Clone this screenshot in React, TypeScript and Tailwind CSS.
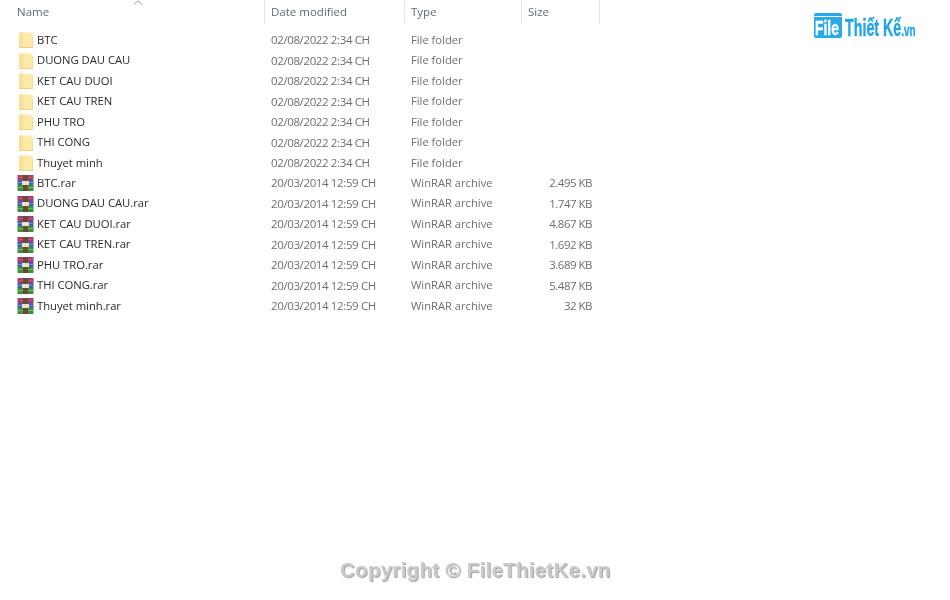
const folders = ["BTC", "DUONG DAU CAU", "KET CAU DUOI", "KET CAU TREN", "PHU TRO", "THI CONG", "Thuyet minh"];

const archives = [
    { name: "BTC.rar", size: "2.495 KB" },
    { name: "DUONG DAU CAU.rar", size: "1.747 KB" },
    { name: "KET CAU DUOI.rar", size: "4.867 KB" },
    { name: "KET CAU TREN.rar", size: "1.692 KB" },
    { name: "PHU TRO.rar", size: "3.689 KB" },
    { name: "THI CONG.rar", size: "5.487 KB" },
    { name: "Thuyet minh.rar", size: "32 KB" },
];

function FolderIcon() {
    return (
        <svg width="14" height="16" viewBox="0 0 14 16" className="ml-[19px] shrink-0">
            <path d="M0 0.500h11l3 2v13H0z" fill="#fdeaa8" />
            <path d="M0 0.500h4v15H0z" fill="#f8e096" />
            <path d="M0 15.500h14V3" fill="none" stroke="#eed088" strokeWidth="1" />
        </svg>
    );
}

function RarIcon() {
    return (
        <svg width="17" height="16" viewBox="0 0 17 16" className="ml-[17px] shrink-0">
            <rect x="0.500" y="0" width="16" height="5" fill="#a0407a" />
            <rect x="0.500" y="5" width="16" height="5" fill="#3f62ad" />
            <rect x="0.500" y="10" width="16" height="6" fill="#3d8f45" />
            <rect x="0.500" y="2" width="16" height="1" fill="#d4524a" />
            <rect x="0.500" y="7" width="16" height="1" fill="#6b90d8" />
            <rect x="0.500" y="12" width="16" height="1" fill="#70bf60" />
            <rect x="6" y="0" width="5" height="16" fill="#6b4a35" />
            <rect x="5" y="6" width="7" height="4" fill="#efe2c0" />
        </svg>
    );
}

function Row({ icon, name, date, type, size, gap }: { icon: React.ReactNode; name: string; date: string; type: string; size?: string; gap: string }) {
    return (
        <div className="flex items-center odd:h-[20px] even:h-[21px]">
            <div className="flex w-[265px] items-center">
                {icon}
                <span className={`${gap} text-[11.3px] tracking-[-0.05px] text-[#2b2b2b]`}>{name}</span>
            </div>
            <div className="w-[140px] pl-[6px] tracking-[-0.38px] text-[#6e6e6e]">{date}</div>
            <div className="w-[117px] pl-[6px] text-[11.2px] text-[#6e6e6e]">{type}</div>
            <div className="w-[70px] text-right tracking-[-0.5px] text-[#6e6e6e]">{size}</div>
        </div>
    );
}

export default function App() {
    return (
        <div className="relative h-[600px] w-[950px] overflow-hidden bg-white font-['Open_Sans',sans-serif] text-[11.5px] blur-[0.3px]">
            {/* Header */}
            <div className="relative flex h-[30px] w-[600px] text-[#5f6b78]">
                <div className="h-[24px] w-[265px] border-r border-[#e6e6e6] pl-[17px] pt-[3px]">Name</div>
                <div className="h-[24px] w-[140px] border-r border-[#e6e6e6] pl-[6px] pt-[3px]">Date modified</div>
                <div className="h-[24px] w-[117px] border-r border-[#e6e6e6] pl-[6px] pt-[3px]">Type</div>
                <div className="h-[24px] w-[78px] border-r border-[#e6e6e6] pl-[6px] pt-[3px]">Size</div>
                <svg width="10" height="5" viewBox="0 0 10 5" className="absolute left-[133px] top-0">
                    <path d="M1 4.500 5 0.800l4 3.700" fill="none" stroke="#9a9a9a" strokeWidth="1" />
                </svg>
            </div>

            {/* File list */}
            <div className="w-[600px]">
                <div>
                    {folders.map((name) => (
                        <Row key={name} icon={<FolderIcon />} gap="ml-[4px]" name={name} date="02/08/2022 2:34 CH" type="File folder" />
                    ))}
                </div>
                <div>
                    {archives.map((file) => (
                        <Row key={file.name} icon={<RarIcon />} gap="ml-[3px]" name={file.name} date="20/03/2014 12:59 CH" type="WinRAR archive" size={file.size} />
                    ))}
                </div>
            </div>

            {/* Logo */}
            <div className="absolute left-[814px] top-[13px] flex items-start">
                <div className="relative h-[25px] w-[28px] rounded-[2px] bg-[#29a9e8]">
                    <div className="absolute left-0 top-[3px] h-px w-full bg-white" />
                    <span className="absolute left-[1px] top-[5px] origin-left scale-x-[0.66] font-['Liberation_Sans',sans-serif] text-[21px] leading-[20px] font-bold text-white [-webkit-text-stroke:0.4px_white]">File</span>
                </div>
                <span className="ml-[3px] mt-[3px] origin-left scale-x-[0.62] whitespace-nowrap font-['Liberation_Sans',sans-serif] text-[23px] leading-[24px] font-bold text-[#22a5e5] [-webkit-text-stroke:0.4px_#22a5e5]">Thiết Kế<span className="text-[16px]">.vn</span></span>
            </div>

            {/* Watermark */}
            <div className="absolute left-[340px] top-[558px] font-['Liberation_Sans',sans-serif] text-[20.5px] leading-[24px] font-bold tracking-[0.28px] whitespace-nowrap text-[#cacaca] [text-shadow:1px_1px_1px_#a0a0a0]">
                Copyright © FileThietKe.vn
            </div>
        </div>
    );
}
